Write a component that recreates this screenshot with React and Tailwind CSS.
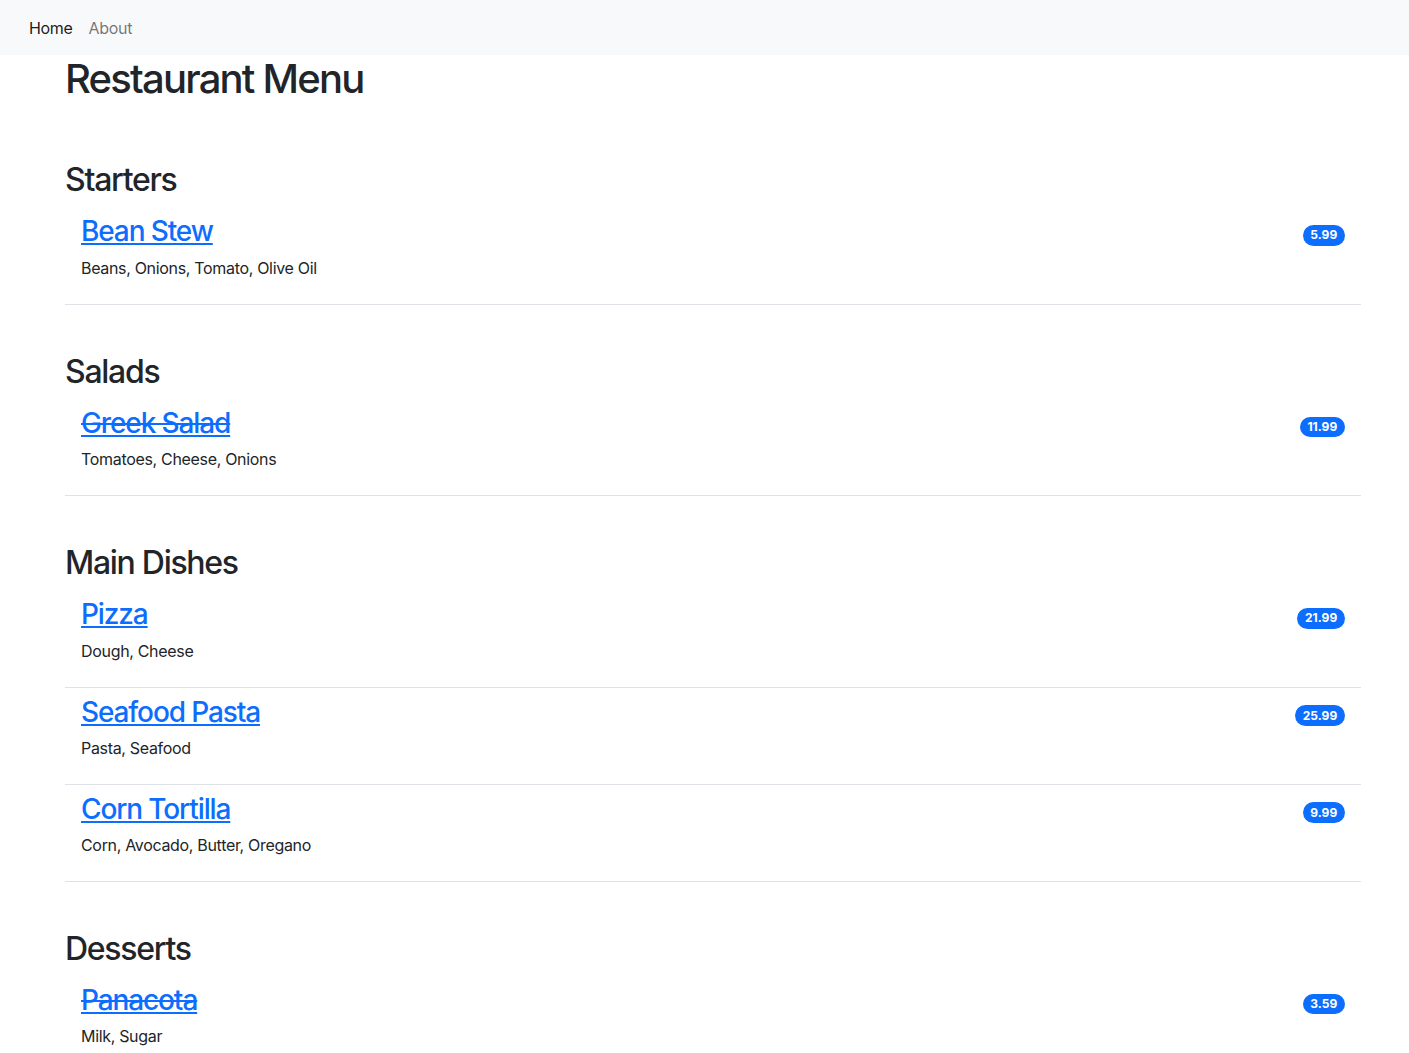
import React from "react";

const menu = [
  {
    title: "Starters",
    items: [{ name: "Bean Stew", desc: "Beans, Onions, Tomato, Olive Oil", price: "5.99" }],
  },
  {
    title: "Salads",
    items: [{ name: "Greek Salad", desc: "Tomatoes, Cheese, Onions", price: "11.99", out: true }],
  },
  {
    title: "Main Dishes",
    items: [
      { name: "Pizza", desc: "Dough, Cheese", price: "21.99" },
      { name: "Seafood Pasta", desc: "Pasta, Seafood", price: "25.99" },
      { name: "Corn Tortilla", desc: "Corn, Avocado, Butter, Oregano", price: "9.99" },
    ],
  },
  {
    title: "Desserts",
    items: [{ name: "Panacota", desc: "Milk, Sugar", price: "3.59", out: true }],
  },
];

const MenuItem = ({ item }) => (
  <li className="px-4 py-2 border-b border-[#dee2e6]">
    <div className="flex justify-between items-center">
      <h3 className="text-[28px] leading-[33.6px] font-medium tracking-[-0.04em] mb-[6.5px]">
        <a
          href="#"
          className="text-[#0d6efd] underline"
          style={item.out ? { textDecorationLine: "underline line-through" } : undefined}
        >
          {item.name}
        </a>
      </h3>
      <span className="bg-[#0d6efd] text-white text-[12px] leading-none font-bold tracking-normal rounded-full px-[7.8px] py-[4.2px]">
        {item.price}
      </span>
    </div>
    <p className="text-base leading-6 mb-4">{item.desc}</p>
  </li>
);

export default function App() {
  return (
    <div className="min-h-screen bg-white text-[#212529] tracking-[-0.02em] font-['Inter','Helvetica',sans-serif]">
      <nav className="h-[55px] bg-[#f8f9fa] flex items-center pl-[29px] gap-4 text-base">
        <a href="#" className="text-black/90">Home</a>
        <a href="#" className="text-black/55">About</a>
      </nav>
      <main className="pl-[65px] w-[1361px]">
        <h1 className="text-[40px] leading-[48px] font-medium tracking-[-0.045em] pb-[10px] mb-2">Restaurant Menu</h1>
        {menu.map((section) => (
          <section key={section.title} className="mt-12">
            <h2 className="text-[32px] leading-[38.4px] font-medium tracking-[-0.04em] mb-2">{section.title}</h2>
            <ul>
              {section.items.map((item) => (
                <MenuItem key={item.name} item={item} />
              ))}
            </ul>
          </section>
        ))}
      </main>
    </div>
  );
}
